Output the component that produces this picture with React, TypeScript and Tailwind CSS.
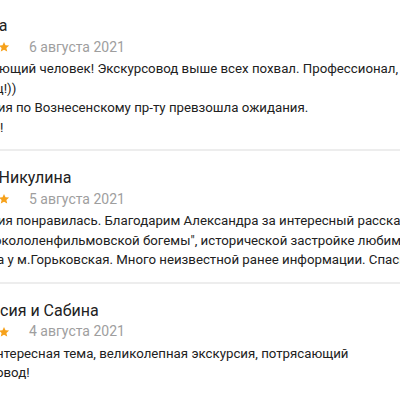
const reviews = [
  {
    name: "Татьяна",
    date: "6 августа 2021",
    lines: [
      "Потрясающий человек! Экскурсовод выше всех похвал. Профессионал,",
      "Молодец!))",
      "Экскурсия по Вознесенскому пр-ту превзошла ожидания.",
      "Спасибо!",
    ],
  },
  {
    name: "Ирина Никулина",
    date: "5 августа 2021",
    lines: [
      "Экскурсия понравилась. Благодарим Александра за интересный рассказ о",
      'жизни "окололенфильмовской богемы", исторической застройке любимого',
      "квартала у м.Горьковская. Много неизвестной ранее информации. Спасибо!",
    ],
  },
  {
    name: "Анастасия и Сабина",
    date: "4 августа 2021",
    lines: [
      "Очень интересная тема, великолепная экскурсия, потрясающий",
      "экскурсовод!",
    ],
  },
];

function Star() {
  return (
    <svg viewBox="0 0 24 24" className="w-3 h-3 shrink-0" fill="#f6a11a">
      <path d="M12 1.8l3 6.6 7.2.7-5.4 4.8 1.6 7.1L12 17.3 5.6 21l1.6-7.1-5.4-4.8 7.2-.7z" />
    </svg>
  );
}

export default function App() {
  return (
    <div className="w-[400px] h-[400px] overflow-hidden bg-white font-['Roboto',sans-serif]">
      {reviews.map((r, i) => (
        <div key={i} className={i === 0 ? "pt-[15px]" : "border-t-2 border-[#ededed] pt-4"}>
          <div className="ml-[-53px] pb-3 whitespace-nowrap">
            <div className="text-[16px] leading-[22px] text-[#212121]">{r.name}</div>
            <div className="flex items-center h-5">
              <div className="ml-[3px] flex">
                <Star />
                <Star />
                <Star />
                <Star />
                <Star />
              </div>
              <span className="ml-[19px] text-[14px] text-[#9e9e9e]">{r.date}</span>
            </div>
            <div className="mt-[2px] text-[13.25px] leading-[19.5px] text-[#212121]">
              {r.lines.map((l, j) => (
                <div key={j}>{l}</div>
              ))}
            </div>
          </div>
        </div>
      ))}
    </div>
  );
}
